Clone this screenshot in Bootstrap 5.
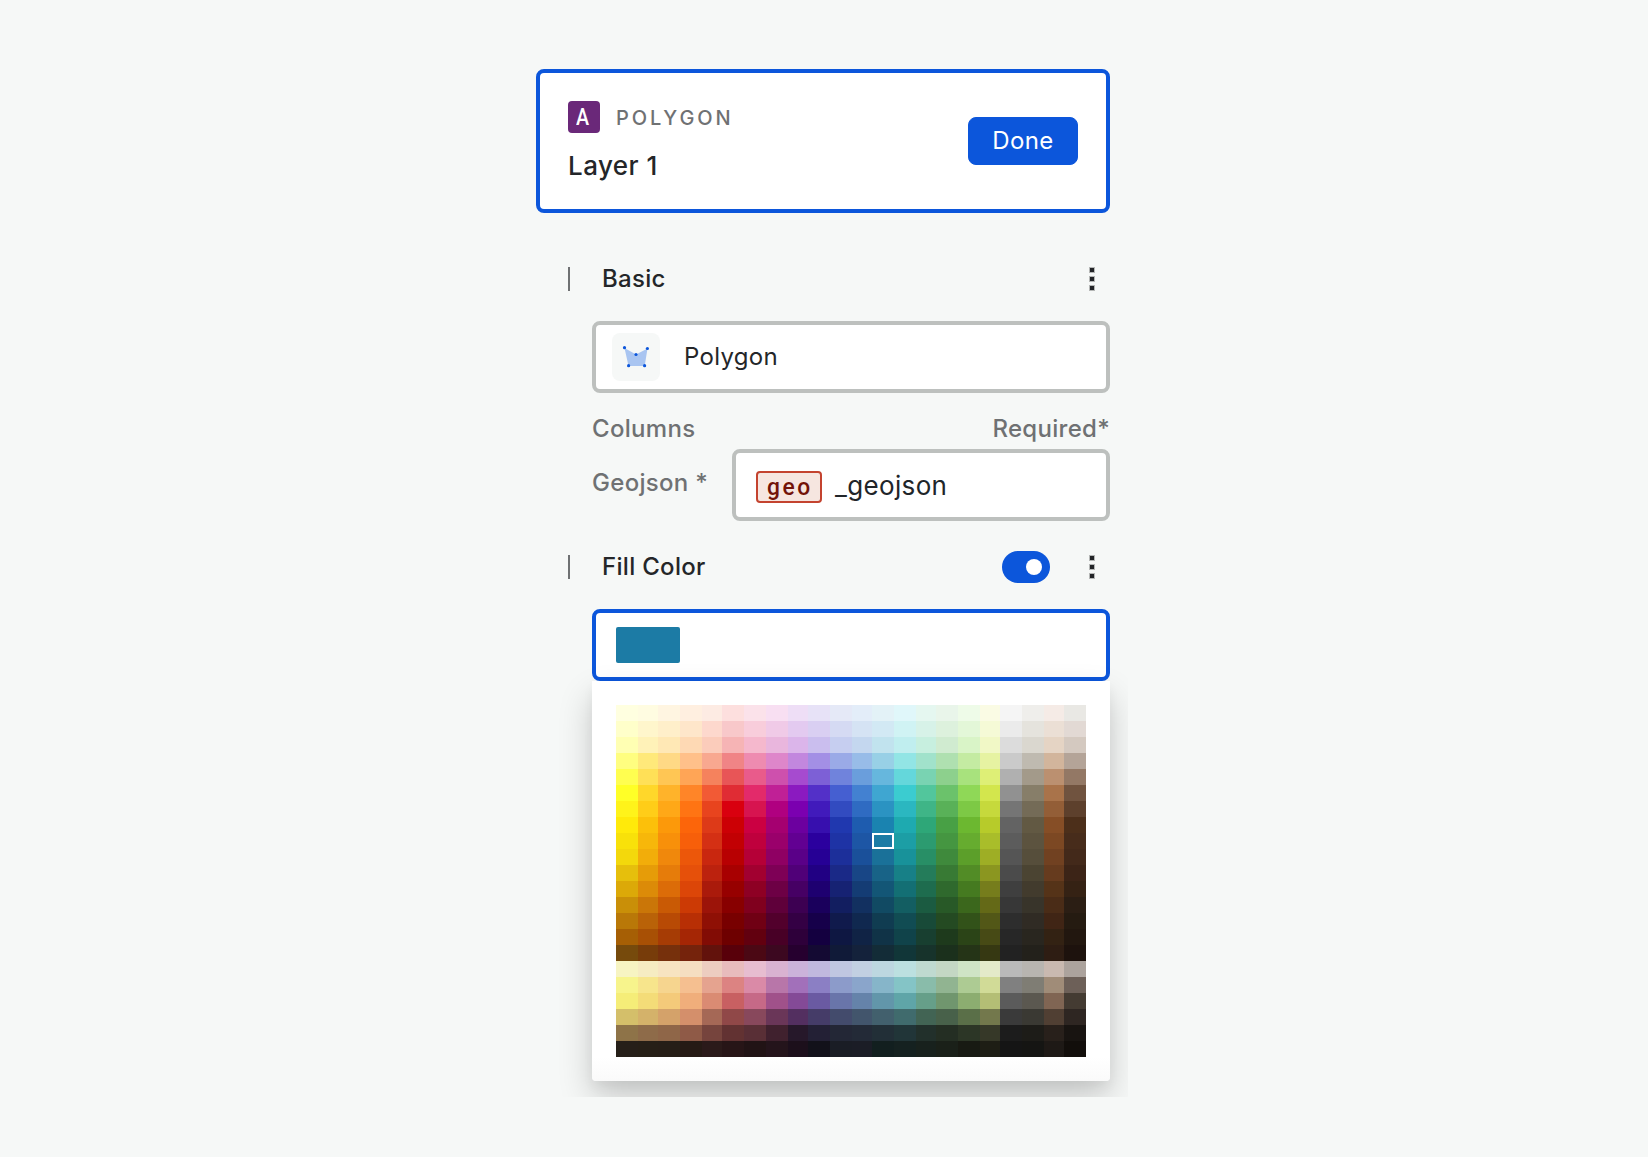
<!DOCTYPE html>
<html lang="en">
<head>
<meta charset="utf-8">
<meta name="viewport" content="width=device-width, initial-scale=1">
<title>Layer settings</title>
<link rel="stylesheet" href="https://cdn.jsdelivr.net/npm/bootstrap@5.3.0/dist/css/bootstrap.min.css">
<style>
  body { background: #f6f8f7; font-family: Inter, "Liberation Sans", sans-serif; font-size: 24px; line-height: 32px; letter-spacing: .3px; color: #242629; }
  .page { padding-left: 536px; }
  .layer-panel { width: 592px; height: 1097px; padding: 69px 18px 0 0; overflow: hidden; }
  .layer-card { height: 144px; border: 4px solid #0c56db; border-radius: 8px; padding: 0 28px; }
  .type-badge { width: 32px; height: 32px; border-radius: 4px; background: #6a2879; color: #fff; font: 500 24px/33px Roboto, sans-serif; letter-spacing: 0; padding-left: 8px; }
  .type-badge span { display: block; transform: scaleX(.82); transform-origin: left; }
  .type-name { font-size: 20px; font-weight: 500; letter-spacing: 2.95px; color: #6f7173; margin-left: 16px; padding-top: 2px; line-height: 30px; }
  .layer-name { font-size: 26px; font-weight: 500; letter-spacing: .45px; padding-top: 17px; margin-bottom: -1px; line-height: 32px; }
  .btn-done { --bs-btn-bg: #0c56db; --bs-btn-border-color: #0c56db; --bs-btn-border-radius: 8px; width: 110px; height: 48px; padding: 0; font-size: 24px; letter-spacing: .4px; line-height: 44px; }
  .section-head { height: 32px; padding: 0 15px 0 32px; margin-top: 30px; font-weight: 500; }
  .section-first { margin-top: 50px; }
  .tick { width: 2px; height: 24px; background: #6f7173; margin-right: 32px; }
  .dots { display: flex; flex-direction: column; gap: 3px; }
  .dots i { width: 6px; height: 6px; background: #222427; border: 1px solid #b5b7b6; }
  .indent { margin: 26px 0 0 56px; }
  .field { height: 72px; border: 4px solid #bdc0be; border-radius: 8px; background: #fff; }
  .field-active { border-color: #0c56db; }
  .icon-tile { width: 48px; height: 48px; border-radius: 8px; background: #f6f8f7; margin: 0 24px 0 16px; }
  .muted { color: #6f7173; font-weight: 500; }
  .columns-head { margin: 20px 0 4px; }
  .column-label { width: 140px; padding-top: 18px; }
  .geo-tag { width: 66px; height: 32px; border: 2px solid #c4432f; border-radius: 4px; background: #f6e6e0; color: #731309; font: 500 24px/29px Roboto, sans-serif; letter-spacing: 2.7px; padding-left: 9px; margin: 4px 13px 0 20px; }
  .geo-tag span { display: block; transform: scaleX(.95); transform-origin: left; }
  .field-value { font-size: 26px; letter-spacing: .35px; padding-top: 2px; }
  .switch { width: 48px; height: 32px; background: #0c56db; padding-right: 8px; margin-right: 39px; }
  .knob { width: 16px; height: 16px; }
  .swatch { width: 64px; height: 36px; border-radius: 2px; background: #1c7ba5; margin-left: 20px; }
  .picker { height: 400px; padding: 24px; border-radius: 0 0 4px 4px; background: linear-gradient(#fff 94%, #fafafa); box-shadow: 0 16px 34px rgba(0,0,0,.2), 0 6px 12px rgba(0,0,0,.04); }
  .palette { display: grid; grid-template-columns: 22px 20px 22px 22px 20px 22px 22px 22px 20px 22px 22px 20px 22px 22px 20px 22px 22px 20px 22px 22px 20px 22px; grid-auto-rows: 16px; }
  .picked { border: 2px solid #fff; }
</style>
</head>
<body>
<main class="page">
  <div class="layer-panel">
    <section class="layer-card bg-white d-flex align-items-center justify-content-between">
      <div>
        <div class="d-flex align-items-center">
          <div class="type-badge"><span>A</span></div>
          <div class="type-name">POLYGON</div>
        </div>
        <div class="layer-name">Layer 1</div>
      </div>
      <button type="button" class="btn btn-primary btn-done">Done</button>
    </section>

    <div class="section-head section-first d-flex align-items-center">
      <span class="tick"></span><span>Basic</span>
      <span class="dots ms-auto"><i></i><i></i><i></i></span>
    </div>
    <div class="indent">
      <div class="field d-flex align-items-center">
        <div class="icon-tile">
          <svg class="d-block" width="48" height="48" viewBox="0 0 48 48">
            <path d="M12.5 15 24 21.5 35.500 15.500 32.700 33H16.500z" fill="#a9c5f1"/>
            <g fill="#0c56db"><circle cx="12.500" cy="14.700" r="1.600"/><circle cx="35.400" cy="15.500" r="1.600"/><circle cx="24" cy="21.500" r="1.600"/><circle cx="16.600" cy="32.700" r="1.600"/><circle cx="32.600" cy="32.700" r="1.600"/></g>
          </svg>
        </div>
        <span>Polygon</span>
      </div>
      <div class="columns-head d-flex justify-content-between muted">
        <span>Columns</span><span>Required*</span>
      </div>
      <div class="d-flex muted">
        <span class="column-label">Geojson *</span>
        <div class="field d-flex align-items-center flex-grow-1 text-body fw-normal">
          <span class="geo-tag"><span>geo</span></span><span class="field-value">_geojson</span>
        </div>
      </div>
    </div>

    <div class="section-head d-flex align-items-center">
      <span class="tick"></span><span>Fill Color</span>
      <span class="switch rounded-pill d-flex align-items-center justify-content-end ms-auto"><span class="knob bg-white rounded-circle"></span></span>
      <span class="dots"><i></i><i></i><i></i></span>
    </div>
    <div class="indent">
      <div class="field field-active d-flex align-items-center"><span class="swatch"></span></div>
      <div class="picker"><div class="palette" id="palette"></div></div>
    </div>
  </div>
</main>
<script src="https://cdn.jsdelivr.net/npm/bootstrap@5.3.0/dist/js/bootstrap.bundle.min.js"></script>
<script>
const shades = `
ffffe0 fffce1 fff5e1 ffefe0 fdebe3 fddfde fbe2ea f8dff2 eedef6 e7e2f7 e5e9f7 e3edf9 e3f2f7 e0f7fa e5f7f0 e9f5ea eefbe8 fafbe4 f5f5f5 efeeeb f5ebe6 e9e8e4
ffffca fff6cc ffefca fee6ca fdd8cd f8c8ca f8cddb f0cae7 e3caf0 d9cff2 d5daf3 d5e3f4 d2e9f4 d0f3f4 d7f2e8 ddf1dd e3f7d8 f5fad6 ebebeb e5e3dd ebdfd5 e2d9d4
ffffb3 fff2b8 ffe8b5 fed9b4 fbccbb f6b4b5 f5b8cd e9b6dd dbb5ea cabeee c6cef0 c4d7ef c1e3ee c0eeef c7efdf d0ebd0 d9f4c7 f1f8c6 dcdcdc dad7cf e5d4c4 d4c9c0
fffe80 ffe97a ffd985 ffc08a f8a890 f08486 ee8bb0 de86ca c287de a38fe5 9aaae7 98bce8 98d0e6 92e5e5 a1e2cb afe0b0 c4eba2 e6f3a2 cacaca bfbab0 d2b59c b4a498
fffe50 ffe057 ffc654 ffa556 f5825d e85557 e95b8b ce50ad a64bcf 7d60d6 7083dc 6a9edc 66b7dd 64d7db 79d3b2 8dd08d a8e27d deef76 b0b0b0 a39a8a bb9070 937865
ffff27 ffd72a ffb32a ff8528 f25a35 e02c34 e32a6a c02096 8b1ac0 5330c8 455fd1 4381d1 3fa6d1 3bccd0 52c69c 6bc26b 8fd857 d3e64d 919191 877e69 a9734a 70533f
fff31a ffcd18 ffa817 ff7413 e8441e d9000f d71450 b00080 7b00b0 411abb 324bc0 2f6bc2 2b93c2 2bb7c0 3fb587 59b158 7dc945 c6d93c 757575 746b57 935e37 5d402c
ffea0a fcc00a fc990a fc650a dd3a18 cc0005 cb0042 a50070 6c009f 370fae 2038af 1e5caf 1a83b0 1eaab0 2ea778 48a045 6cb830 b7cb2a 636363 625943 864e26 4c2f1a
f8e10a f7b70a f8900a f75f0a d43014 c20003 bf003d 9a006b 620092 2b009e 1e33a5 1d56a5 1c7ba5 1c9ea5 2c9b70 459641 66ac2f a9bd2a 5c5c5c 5c533f 7c4823 472c1b
f3d80c f2ad0a f0880c ec570a c9270f b80002 b50037 8f0063 5a0088 260095 1c2f9a 1a509a 1a7199 18929a 288f66 3f8a3c 5c9f2a 9eae25 555555 564e3b 714121 43291a
e6bf0c e69c08 e67c0a e6500a bc220e a80001 a20030 7e0056 500078 210083 1a2987 184686 186387 178087 247c5a 387a34 528c26 8b9620 4b4b4b 4b4432 663b1e 3c2417
dca908 dc8b08 dc6c08 dc4608 aa1a0b 970000 8e0024 6d0045 460064 1e0070 162273 143c74 135676 136f74 1e6c4e 2f692d 457a20 767d1c 3f3f3f 423b2d 553318 352214
c98f08 ca7608 c95a05 cc3a05 9c1409 880000 80001e 5f003a 3d0052 1a005c 121e60 123060 114a63 135e62 1b5b41 285927 3b671c 646917 373737 38342a 4a2c17 2b1e14
b97808 b96208 b84a05 b82f05 8f1005 780000 700014 52002c 340044 16004a 101a4c 10284f 103c51 114c53 184a38 244a22 325219 525717 2d2d2d 302b24 402515 251b11
a65f05 a85005 a63c05 a52605 820c05 6e0000 62000f 480026 2e003a 140040 0e1742 102345 103347 10434a 183f30 1e3a1c 2b4417 474a15 272727 29261f 332213 22170f
764a0c 773c0a 76300c 75230c 62120c 58000a 4b0814 3c0820 26002f 140a33 101a38 14223b 132c37 113638 17332b 1b301c 253417 363812 222222 23211b 2e1d13 1d120d
f7f4c2 f6ecc2 f7e4c1 f5dec1 edcdc0 e8bcbd e7bdd0 d9b2d1 cbb2da c0b8de c0c7e1 c2d0e2 bdd7e0 bce0e0 bfdad0 c4d7c4 cfe4c5 e4eac9 b9b9b9 b8b5b0 c9b9b0 aca39d
f7f48c f7e58c f6d58f f5bf90 e5a38f dc8382 da8aa7 b876a9 a270ba 8b7fc4 8c9bca 8aa5cb 86b5c9 84c4c6 89bcaa 91b491 adcb93 d1db97 808080 7f7d74 a08c78 6d6058
f5ed78 f4dc78 f4ca7a f0ae7b da8b73 c86062 c66987 a0518a 844a97 6a5aa2 6975aa 6583aa 6296aa 5fa5a8 669f89 70966e 8cad70 b4be75 5b5b5b 5b5850 806553 443b32
d4bf6a d4b26a d4a26a d48f6b a56856 904848 88485c 6a3658 532f60 453c68 434b6c 42556c 42606d 406b6d 426454 48614a 5a6f48 73784c 3a3a3a 3a3933 503f33 2e2622
8e7348 8e6b49 8f6648 8f5a47 76443d 623232 592f36 40212e 26182a 232035 232736 232a37 222f37 213538 22302b 242e23 2c3626 363828 1c1c1c 1d1c18 28201b 181411
261f19 261f17 261e17 261a15 2b1a1a 271517 211315 24141b 1c0f1b 12111a 1a1d25 1b1d26 121f1f 152120 18211d 1a2019 181a13 1e1e15 151515 151513 1e1916 120e0b`.trim().split(/\s+/);
const selected = 8 * 22 + 12;
document.getElementById('palette').innerHTML = shades.map((c, i) =>
  `<span${i === selected ? ' class="picked"' : ''} style="background:#${c}"></span>`).join('');
</script>
</body>
</html>
